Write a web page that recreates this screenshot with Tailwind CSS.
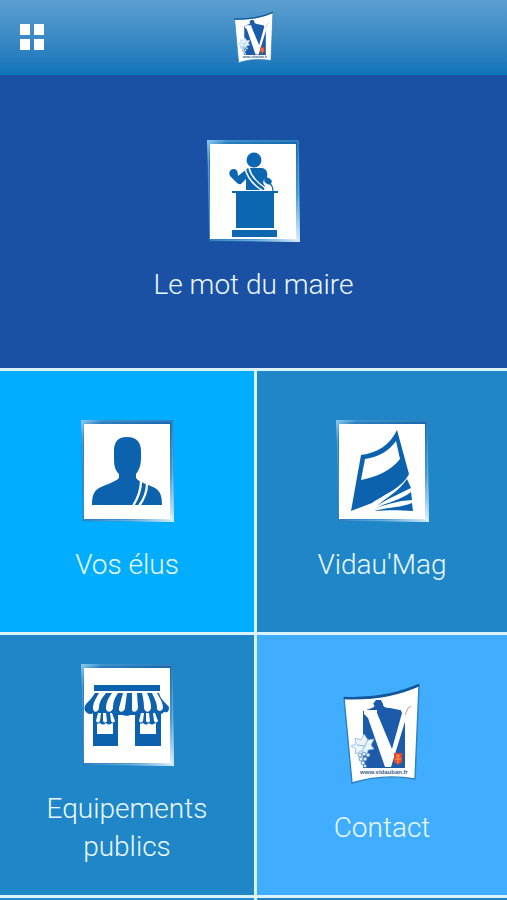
<!DOCTYPE html>
<html lang="fr">
<head>
<meta charset="utf-8">
<meta name="viewport" content="width=device-width, initial-scale=1">
<title>Vidauban</title>
<script src="https://cdn.jsdelivr.net/npm/@tailwindcss/browser@4"></script>
</head>
<body class="flex min-h-screen flex-col bg-[#d9f3ff] font-['Roboto','Liberation_Sans',sans-serif] text-[28px] leading-[38px] font-light text-[#ebf9ff]">

<svg class="absolute size-0" aria-hidden="true">
  <defs>
    <linearGradient id="edge" x1="0" y1="0" x2="1" y2="1">
      <stop offset="0" stop-color="#8fcdf0"/>
      <stop offset=".12" stop-color="#2a7fc0"/>
      <stop offset=".5" stop-color="#1668b0"/>
      <stop offset=".75" stop-color="#4b9ad2"/>
      <stop offset="1" stop-color="#f2fbff"/>
    </linearGradient>
    <symbol id="frame" viewBox="0 0 93 102">
      <path d="M0 0H92L93 102L2 101Z" fill="url(#edge)"/>
      <path d="M1 1H91L92 101L3 100Z" fill="none" stroke="#8cc8ea" stroke-opacity=".45"/>
      <path d="M3 4H89V99H3Z" fill="#fff"/>
    </symbol>
    <symbol id="crest" viewBox="0 0 78 102">
      <path d="M1 15C26 16 52 13 76 2L72 96C50 92 28 94 9 100Z" fill="#fff" stroke="#2f80c0" stroke-width="1.4"/>
      <path d="M1 15C26 16 52 13 76 2" fill="none" stroke="#125797" stroke-width="2.6"/>
      <path d="M20 28L29 25C32 24 32 22 30 21L33 17H38L40 21C40 24 43 25 47 25L62 28V85H20Z" fill="#1b5ba9"/>
      <path d="M21 27H34V30L49 66L59 30L57 25H67V28L64 32L48 84H42L25 35L21 31Z" fill="#fff"/>
      <path d="M62 32L65 25L68 23" fill="none" stroke="#c79a96"/>
      <path d="M8 63L13 61L12 55L18 57L21 51L25 57L31 56L28 62L31 66L25 67L24 72L18 68L12 71L13 66Z" fill="#eaf5fc" stroke="#8fb8dc" stroke-width=".8"/>
      <path d="M14 62L22 63L25 56M22 63L19 68" fill="none" stroke="#8ab4da"/>
      <g fill="#e5f1fa" stroke="#4e88c0" stroke-width=".8">
        <circle cx="17" cy="72" r="2"/><circle cx="21" cy="71" r="2"/><circle cx="25" cy="72" r="2"/>
        <circle cx="18" cy="76" r="2"/><circle cx="22" cy="76" r="2"/><circle cx="20" cy="80" r="2"/><circle cx="22" cy="83" r="1.6"/>
      </g>
      <path d="M51 70H59V79L55 82L51 79Z" fill="#e64a2e"/>
      <path d="M53 73H57M52 76H58M55 71V80" stroke="#f5a24a" fill="none"/>
      <text x="41" y="91" text-anchor="middle" font-family="Liberation Sans, sans-serif" font-size="6" font-weight="700" fill="#3c5f8d">www.vidauban.fr</text>
    </symbol>
  </defs>
</svg>

<header class="grid h-[75px] shrink-0 grid-cols-[1fr_auto_1fr] items-center bg-linear-to-b from-[#5b9fd0] to-[#0d74b9] px-5">
  <button type="button" aria-label="Menu" class="justify-self-start">
    <svg viewBox="0 0 25 27" class="h-[27px] w-[25px]" fill="#fff"><path d="M0 0H10V11H0ZM14 0H24V11H14ZM0 15H10V26H0ZM14 15H24V26H14Z"/></svg>
  </button>
  <a href="#accueil" aria-label="Accueil"><svg class="h-[53px] w-10"><use href="#crest"/></svg></a>
</header>

<main class="grid grow grid-cols-[254fr_250fr] grid-rows-[293fr_261fr_260fr_2px] gap-[3px]">
  <a href="#maire" class="col-span-2 flex flex-col items-center justify-center gap-6 bg-[#1b51a4]">
    <svg viewBox="0 0 93 102" class="h-[102px] w-[93px]" fill="#0d67b0" aria-hidden="true">
      <use href="#frame"/>
      <circle cx="47" cy="20" r="7.5"/>
      <path d="M41 28H55C60 29 61 33 60 38C56 39 55 43 58 46L57 50H39V39L34 44C32 45 30 43 28 41L24 37C21 34 22 29 27 29C30 29 31 32 31 36Z"/>
      <path d="M38 28C40 38 48 46 56 51M42 28C44 36 52 44 60 49" fill="none" stroke="#fff" stroke-width="1.5"/>
      <ellipse cx="61" cy="41" rx="4" ry="3" transform="rotate(35 61 41)"/>
      <path d="M62 43C65 45 66 47 66 51" fill="none" stroke="#0d67b0" stroke-width="1.3"/>
      <path d="M25 51H71V53H67V88H29V53H25ZM25 90H70V97H25Z"/>
    </svg>
    <span>Le mot du maire</span>
  </a>

  <a href="#elus" class="flex flex-col items-center justify-center gap-6 bg-[#00adff]">
    <svg viewBox="0 0 93 102" class="h-[102px] w-[93px]" fill="#0d62ad" aria-hidden="true">
      <use href="#frame"/>
      <path d="M46 17C56 17 60 23 60 31V38C60 46 58 50 55 54V58C58 62 66 64 72 67C79 70 81 75 81 85H11C11 75 13 70 20 67C26 64 34 62 38 58V54C34 50 33 46 33 38V31C33 23 36 17 46 17Z"/>
      <path d="M60 61C60 70 57 78 52 86M66 64C66 72 63 79 58 86" fill="none" stroke="#fff" stroke-width="2.3"/>
    </svg>
    <span>Vos élus</span>
  </a>

  <a href="#mag" class="flex flex-col items-center justify-center gap-6 bg-[#1f86c8]">
    <svg viewBox="0 0 93 102" class="h-[102px] w-[93px]" fill="#0d62ad" aria-hidden="true">
      <use href="#frame"/>
      <path d="M25 35C41 33 54 25 61 10L73 54C66 68 49 74 36 83L15 91Z"/>
      <path d="M29 39C43 37 53 31 60 21L64 39C54 52 39 57 25 60Z" fill="#fff"/>
      <path d="M71 59L75 68C61 75 51 79 41 86C51 77 62 72 71 59ZM75 72L76 80C61 81 52 84 40 88C52 82 65 80 75 72ZM76 83L77 91C63 90 52 90 38 91C52 87 64 88 76 83Z"/>
    </svg>
    <span>Vidau'Mag</span>
  </a>

  <a href="#equipements" class="flex flex-col items-center justify-center gap-6 bg-[#1f86c8]">
    <svg viewBox="0 0 93 102" class="h-[102px] w-[93px]" fill="#0d62ad" aria-hidden="true">
      <use href="#frame"/>
      <path d="M13 21H79V27H13Z"/>
      <path d="M12 46H80V82H54V51H37V82H12Z"/>
      <path d="M14 29H78C80 36 84 38 88 43C88 48 86 49 83 48Q80 52 76 48Q73 52 69 49Q65 53 61 49Q57 53 53 49Q46 55 38 49Q34 53 30 49Q26 52 22 49Q18 52 15 48C12 49 9 52 5 48C2 45 4 41 6 39C10 35 12 32 14 29Z"/>
      <g fill="#fff">
        <path d="M18 29H25C20 35 18 39 18 44C17 49 12 49 12 44C12 38 16 33 18 29Z"/>
        <path d="M31 29H37C33 35 32 39 32 44C31 49 25 49 25 44C25 38 28 33 31 29Z"/>
        <path d="M42 29H46L44 44C43 49 37 49 38 44Z"/>
        <path d="M51 29H56L57 44C56 49 50 49 51 44Z"/>
        <path d="M61 29H66C69 35 70 39 70 44C69 49 64 49 63 44C63 38 62 34 61 29Z"/>
        <path d="M71 29H76C79 35 82 38 82 44C81 48 76 48 76 44C76 38 73 34 71 29Z"/>
        <path d="M16 59H32V70H16ZM59 59H75V70H59Z"/>
      </g>
      <g id="awning">
        <path d="M15 48H33L36 57Q34 62 31 59Q28 62 25 59Q22 62 19 59Q15 61 13 57Z"/>
        <path d="M17 49L15 57Q17 60 19 57L20 49ZM22 49V57Q24 60 26 57L25 49ZM29 49L30 57Q32 60 34 57L31 49Z" fill="#fff"/>
      </g>
      <use href="#awning" x="43"/>
    </svg>
    <span class="text-center">Equipements<br>publics</span>
  </a>

  <a href="#contact" class="flex flex-col items-center justify-center gap-6 bg-[#40adff]">
    <svg class="h-[102px] w-[78px]" aria-hidden="true"><use href="#crest"/></svg>
    <span>Contact</span>
  </a>

  <div class="bg-[#258bd0]"></div>
  <div class="bg-[#2583c4]"></div>
</main>
</body>
</html>
